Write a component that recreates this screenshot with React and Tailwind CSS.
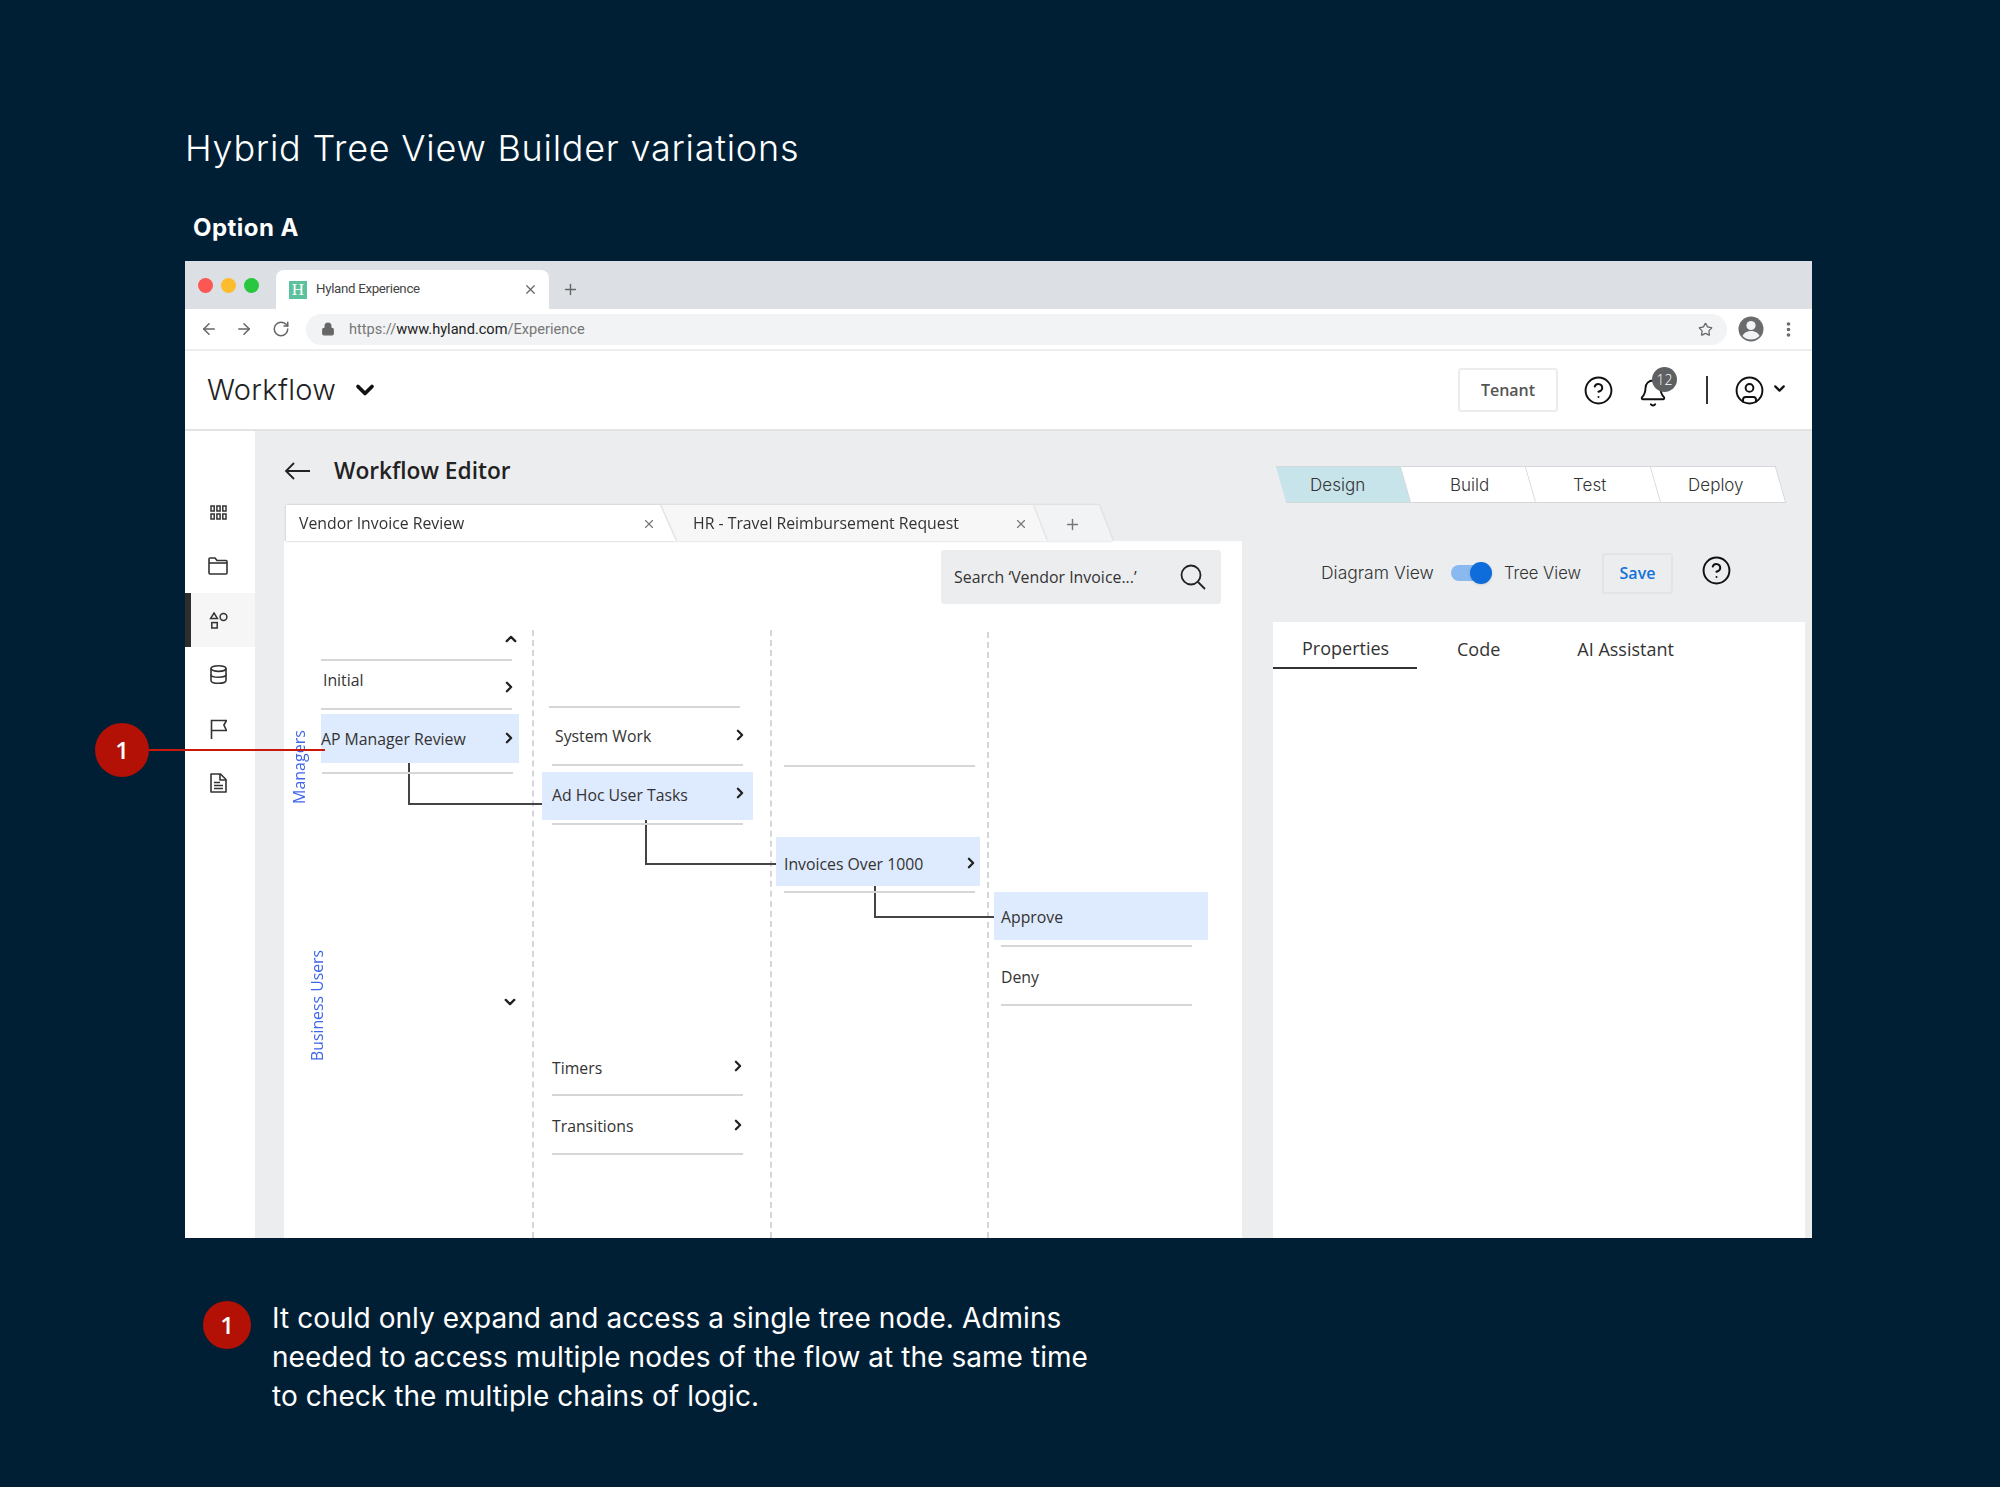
import React from "react";
import { ChevronRight, ChevronDown, ChevronUp, X, Plus, RotateCw, ArrowLeft, ArrowRight, Lock, Star, EllipsisVertical, CircleHelp, Bell, CircleUser } from "lucide-react";

const sansInter = "font-['Inter',sans-serif]";

// Small helpers for the tree canvas, everything in there is placed on the canvas
const Label = ({ className, children }) => (
  <span className={`absolute -translate-y-1/2 text-[15.8px] leading-[22px] text-[#333] whitespace-nowrap ${className}`}>{children}</span>
);
const Rule = ({ className }) => <div className={`absolute h-[2px] bg-[#d4d6d8] ${className}`} />;
const Chev = ({ className, Icon = ChevronRight }) => (
  <Icon size={17} strokeWidth={3.2} className={`absolute -translate-x-1/2 -translate-y-1/2 text-[#222] ${className}`} />
);
const Dashed = ({ className }) => <div className={`absolute bottom-0 border-l-2 border-dashed border-[#d4d6d8] ${className}`} />;
const Elbow = ({ className }) => <div className={`absolute border-l-2 border-b-2 border-[#444] ${className}`} />;
const Box = ({ className }) => <div className={`absolute bg-[#deeafd] ${className}`} />;

const SideIcon = ({ active, children }) => (
  <div className={`h-[54px] flex items-center justify-center border-l-[6px] ${active ? "bg-[#f6f6f6] border-[#2b2d2f]" : "border-transparent"}`}>
    <div className="-translate-x-[5px] flex items-center justify-center">{children}</div>
  </div>
);

const Step = ({ label, active, textClass }) => (
  <div className={`w-[125px] h-full flex items-center justify-center skew-x-[16deg] border-r border-b border-t border-[#d5d7da] ${active ? "bg-[#c7e4ea]" : "bg-white"}`}>
    <span className={`-skew-x-[16deg] pt-[2px] text-[17px] text-[#333] font-light ${sansInter} ${textClass}`}>{label}</span>
  </div>
);

export default function App() {
  return (
    <div className="relative w-[2000px] h-[1487px] bg-[#001f35] font-['Open_Sans',sans-serif] overflow-hidden">
      <div className="pl-[185px]">
        <h1 className={`pt-[125px] h-[204px] text-[36px] leading-[46px] font-light text-white tracking-[0.76px] ${sansInter}`}>
          Hybrid Tree View Builder variations
        </h1>
        <div className={`h-[57px] pl-[8px] pt-[1px] text-[24px] leading-[46px] font-bold text-white tracking-[0.45px] ${sansInter}`}>Option A</div>

        {/* browser frame */}
        <div className="w-[1627px] h-[977px] bg-white flex flex-col overflow-hidden">
          <div className="h-[48px] bg-[#dcdfe3] flex items-end shrink-0">
            <div className="w-[91px] h-full flex items-center pl-[13px] gap-[8px] pt-[1px]">
              <span className="w-[15px] h-[15px] rounded-full bg-[#fc5753]" />
              <span className="w-[15px] h-[15px] rounded-full bg-[#fdbc2c]" />
              <span className="w-[15px] h-[15px] rounded-full bg-[#27c83f]" />
            </div>
            <div className="w-[273px] h-[39px] bg-white rounded-t-[8px] flex items-center pl-[13px] pr-[11px]">
              <span className="w-[18px] h-[18px] bg-[#5cc29d] text-white text-[17px] leading-[18px] text-center font-['Liberation_Serif',serif]">H</span>
              <span className="ml-[9px] flex-1 -mt-[2px] text-[13.3px] tracking-[-0.32px] text-[#444] font-['Roboto',sans-serif]">Hyland Experience</span>
              <X size={15} className="text-[#666]" />
            </div>
            <Plus size={17} className="ml-[13px] mb-[11px] text-[#666]" />
          </div>

          <div className="h-[42px] flex items-center shrink-0 border-b-2 border-[#eceef0]">
            <ArrowLeft size={18} className="ml-[15px] text-[#666]" />
            <ArrowRight size={18} className="ml-[17px] text-[#666]" />
            <RotateCw size={18} className="ml-[19px] text-[#666]" />
            <div className="ml-[16px] w-[1421px] h-[31px] rounded-full bg-[#f1f3f4] flex items-center pl-[15px] pr-[14px] font-['Roboto',sans-serif] text-[14.6px]">
              <Lock size={14} fill="#666" className="text-[#666]" />
              <span className="ml-[14px] flex-1 mt-[2px] text-[#777]">
                https://<span className="text-[#222]">www.hyland.com</span>/Experience
              </span>
              <Star size={15} className="text-[#666]" />
            </div>
            <svg width="26" height="26" viewBox="0 0 26 26" className="ml-[11px]">
              <circle cx="13" cy="13" r="12.5" fill="#6a6b6d" />
              <circle cx="13" cy="9.5" r="4.6" fill="#f1f3f4" />
              <path d="M4.5 20c1.5-3.6 5-5 8.5-5s7 1.4 8.5 5a12 12 0 0 1-17 0z" fill="#f1f3f4" />
            </svg>
            <EllipsisVertical size={19} strokeWidth={2.6} className="ml-[15px] text-[#666]" />
          </div>

          <div className="h-[80px] flex items-center shrink-0 border-b-2 border-[#e2e3e5] pl-[22px]">
            <span className={`text-[29px] font-light text-[#222] tracking-[0.28px] ${sansInter}`}>Workflow</span>
            <ChevronDown size={28} strokeWidth={3.2} className="ml-[15px] text-[#111]" />
            <div className="ml-auto flex items-center pr-[24px]">
              <div className="w-[100px] h-[44px] rounded-[3px] border-2 border-[#ebecee] flex items-center justify-center text-[16px] font-semibold text-[#555]">Tenant</div>
              <CircleHelp size={31} strokeWidth={1.5} className="ml-[25px] text-[#111]" />
              <div className="relative ml-[24px] mt-[6px]">
                <Bell size={30} strokeWidth={1.5} className="text-[#111]" />
                <span className="absolute -top-[11px] left-[14px] w-[25px] h-[25px] rounded-full bg-[#5f6062] text-white text-[14px] font-light leading-[25px] text-center">12</span>
              </div>
              <div className="ml-[38px] w-[2px] h-[28px] bg-[#333]" />
              <CircleUser size={31} strokeWidth={1.5} className="ml-[26px] text-[#111]" />
              <ChevronDown size={17} strokeWidth={3} className="ml-[6px] -mt-[3px] text-[#111]" />
            </div>
          </div>

          <div className="flex-1 flex min-h-0">
            {/* side rail */}
            <div className="w-[70px] shrink-0 pt-[54px] flex flex-col">
              <SideIcon>
                <svg width="17" height="15" viewBox="0 0 17 15" fill="none" stroke="#333" strokeWidth="1.5">
                  <rect x="1" y="1" width="3.2" height="5" /><rect x="6.9" y="1" width="3.2" height="5" /><rect x="12.8" y="1" width="3.2" height="5" />
                  <rect x="1" y="9" width="3.2" height="5" /><rect x="6.9" y="9" width="3.2" height="5" /><rect x="12.8" y="9" width="3.2" height="5" />
                </svg>
              </SideIcon>
              <SideIcon>
                <svg width="20" height="18" viewBox="0 0 20 18" fill="none" stroke="#333" strokeWidth="1.6" strokeLinejoin="round">
                  <path d="M1 2a1 1 0 0 1 1-1h5l2 2.5h9a1 1 0 0 1 1 1V16a1 1 0 0 1-1 1H2a1 1 0 0 1-1-1z" />
                  <path d="M1 6h18" />
                </svg>
              </SideIcon>
              <SideIcon active>
                <svg width="19" height="17" viewBox="0 0 19 17" fill="none" stroke="#333" strokeWidth="1.5" className="mt-[1px]">
                  <path d="M5 1l3.4 5.4H1.6z" /><circle cx="14.5" cy="5" r="3.4" /><rect x="2.8" y="10.6" width="5.4" height="5.4" />
                </svg>
              </SideIcon>
              <SideIcon>
                <svg width="17" height="19" viewBox="0 0 17 19" fill="none" stroke="#333" strokeWidth="1.6">
                  <ellipse cx="8.5" cy="3.6" rx="7.5" ry="2.8" />
                  <path d="M1 3.6v11.8c0 1.6 3.4 2.8 7.5 2.8s7.5-1.2 7.5-2.8V3.6" />
                  <path d="M1 9.5c0 1.6 3.4 2.8 7.5 2.8S16 11.1 16 9.5" />
                </svg>
              </SideIcon>
              <SideIcon>
                <svg width="17" height="20" viewBox="0 0 17 20" fill="none" stroke="#333" strokeWidth="1.6" className="mt-[1px]">
                  <path d="M1.5 20V1.5h15l-2.6 4.5 2.6 5.500h-15" />
                </svg>
              </SideIcon>
              <SideIcon>
                <svg width="17" height="20" viewBox="0 0 17 20" fill="none" stroke="#333" strokeWidth="1.6" strokeLinejoin="round" className="mt-[1px]">
                  <path d="M1 1h9.5L16 6.5V19H1z" />
                  <path d="M10 1v6h6" />
                  <path d="M4 9.5h6M4 12.5h9M4 15.5h9" />
                </svg>
              </SideIcon>
            </div>

            <div className="flex-1 bg-[#ecedef] flex min-w-0">
              {/* editor column */}
              <div className="w-[987px] shrink-0 pl-[29px] flex flex-col">
                <div className="h-[74px] flex items-center shrink-0 pt-[6px]">
                  <svg width="26" height="20" viewBox="0 0 26 20" fill="none" stroke="#222" strokeWidth="1.8">
                    <path d="M26 10H2M10 2l-8 8 8 8" />
                  </svg>
                  <span className="ml-[24px] text-[22.7px] font-semibold text-[#222]">Workflow Editor</span>
                </div>
                <div className="h-[36px] flex shrink-0 ml-[2px]">
                  <div className="relative z-[3] w-[390px] h-full drop-shadow-[0_0_1px_#b9bbbe]">
                    <div className="w-full h-full bg-white flex items-center pl-[13px] pr-[20px] pt-[2px] [clip-path:polygon(0_0,374px_0,390px_100%,0_100%)]">
                      <span className="flex-1 text-[15.8px] text-[#333]">Vendor Invoice Review</span>
                      <X size={14} className="text-[#777]" />
                    </div>
                  </div>
                  <div className="relative z-[2] -ml-[16px] w-[387px] h-full drop-shadow-[0_0_1px_#c6c8cb]">
                    <div className="w-full h-full bg-[#f7f7f7] flex items-center pl-[33px] pr-[19px] pt-[2px] [clip-path:polygon(0_0,373px_0,387px_100%,16px_100%)]">
                      <span className="flex-1 text-[15.8px] text-[#333]">HR - Travel Reimbursement Request</span>
                      <X size={14} className="text-[#777]" />
                    </div>
                  </div>
                  <div className="relative z-[1] -ml-[14px] w-[80px] h-full drop-shadow-[0_0_1px_#c6c8cb]">
                    <div className="w-full h-full bg-[#f2f3f4] flex items-center justify-center pr-[2px] pt-[2px] [clip-path:polygon(0_0,66px_0,80px_100%,14px_100%)]">
                      <Plus size={17} className="text-[#777]" />
                    </div>
                  </div>
                </div>

                {/* tree canvas */}
                <div className="relative flex-1 bg-white w-[958px]">
                  <div className="absolute right-[21px] top-[9px] w-[280px] h-[54px] rounded-[3px] bg-[#ecedef] flex items-center pl-[13px] pr-[15px] text-[15.9px] text-[#333]">
                    <span className="flex-1 mt-[2px]">Search ‘Vendor Invoice...’</span>
                    <svg width="26" height="26" viewBox="0 0 26 26" fill="none" stroke="#222" strokeWidth="1.8"><circle cx="11" cy="11" r="9.5" /><path d="M18 18l7 7" /></svg>
                  </div>

                  <Dashed className="left-[248px] top-[89px]" />
                  <Dashed className="left-[486px] top-[89px]" />
                  <Dashed className="left-[703px] top-[91px]" />

                  <Box className="left-[37px] top-[173px] w-[198px] h-[49px]" />
                  <Box className="left-[258px] top-[231px] w-[211px] h-[48px]" />
                  <Box className="left-[492px] top-[296px] w-[204px] h-[49px]" />
                  <Box className="left-[710px] top-[351px] w-[214px] h-[48px]" />

                  <Elbow className="left-[124px] top-[222px] w-[134px] h-[42px]" />
                  <Elbow className="left-[361px] top-[279px] w-[131px] h-[45px]" />
                  <Elbow className="left-[590px] top-[345px] w-[120px] h-[32px]" />

                  <Chev Icon={ChevronUp} className="left-[227px] top-[98px]" />
                  <Rule className="left-[37px] top-[118px] w-[191px]" />
                  <Label className="left-[39px] top-[139px]">Initial</Label>
                  <Chev className="left-[225px] top-[146px]" />
                  <Rule className="left-[37px] top-[167px] w-[191px]" />
                  <Label className="left-[37px] top-[198px]">AP Manager Review</Label>
                  <Chev className="left-[225px] top-[197px]" />
                  <Rule className="left-[38px] top-[231px] w-[191px]" />

                  <Rule className="left-[265px] top-[165px] w-[191px]" />
                  <Label className="left-[271px] top-[195px]">System Work</Label>
                  <Chev className="left-[456px] top-[194px]" />
                  <Rule className="left-[268px] top-[223px] w-[191px]" />
                  <Label className="left-[268px] top-[254px]">Ad Hoc User Tasks</Label>
                  <Chev className="left-[456px] top-[252px]" />
                  <Rule className="left-[268px] top-[282px] w-[191px]" />

                  <Rule className="left-[500px] top-[224px] w-[191px]" />
                  <Label className="left-[500px] top-[323px]">Invoices Over 1000</Label>
                  <Chev className="left-[687px] top-[322px]" />
                  <Rule className="left-[500px] top-[350px] w-[191px]" />

                  <Label className="left-[717px] top-[376px]">Approve</Label>
                  <Rule className="left-[717px] top-[404px] w-[191px]" />
                  <Label className="left-[717px] top-[436px]">Deny</Label>
                  <Rule className="left-[717px] top-[463px] w-[191px]" />

                  <Chev Icon={ChevronDown} className="left-[226px] top-[461px]" />
                  <Label className="left-[268px] top-[527px]">Timers</Label>
                  <Chev className="left-[454px] top-[525px]" />
                  <Rule className="left-[268px] top-[553px] w-[191px]" />
                  <Label className="left-[268px] top-[585px]">Transitions</Label>
                  <Chev className="left-[454px] top-[584px]" />
                  <Rule className="left-[268px] top-[612px] w-[191px]" />

                  <span className="absolute left-[6px] top-[189px] h-[74px] [writing-mode:vertical-rl] rotate-180 text-[16px] leading-[18px] text-[#3f66ea] whitespace-nowrap">Managers</span>
                  <span className="absolute left-[24px] top-[408px] h-[112px] [writing-mode:vertical-rl] rotate-180 text-[15.8px] leading-[18px] text-[#3f66ea] whitespace-nowrap">Business Users</span>
                </div>
              </div>

              {/* right column */}
              <div className="flex-1 flex flex-col min-w-0">
                <div className="h-[37px] mt-[35px] flex pl-[39px] shrink-0">
                  <Step label="Design" active textClass="-translate-x-[5px]" />
                  <Step label="Build" textClass="translate-x-[2px]" />
                  <Step label="Test" textClass="-translate-x-[3px]" />
                  <Step label="Deploy" textClass="-translate-x-[2px]" />
                </div>
                <div className="h-[119px] flex items-center shrink-0 pl-[79px] pt-[21px] text-[17.5px] font-light text-[#333]">
                  <span className={sansInter}>Diagram View</span>
                  <div className="relative ml-[17px] w-[41px] h-[16px] rounded-full bg-[#8ab9ef]">
                    <span className="absolute right-0 -top-[3px] w-[22px] h-[22px] rounded-full bg-[#0f6cdb] shadow" />
                  </div>
                  <span className={`ml-[12px] text-[16.6px] ${sansInter}`}>Tree View</span>
                  <div className="ml-[21px] w-[71px] h-[41px] rounded-[3px] border-2 border-[#e3e4e6] flex items-center justify-center text-[16px] font-semibold text-[#1272d8] font-['Open_Sans',sans-serif]">Save</div>
                  <CircleHelp size={31} strokeWidth={1.5} className="ml-[28px] -mt-[6px] text-[#111]" />
                </div>
                <div className="flex-1 ml-[31px] w-[532px] bg-white">
                  <div className="flex h-[47px] text-[18px] text-[#333]">
                    <div className="w-[144px] h-full flex items-center pl-[29px] pt-[8px] border-b-2 border-[#333]">Properties</div>
                    <div className="ml-[40px] h-full flex items-center pt-[8px]">Code</div>
                    <div className="ml-[77px] h-full flex items-center pt-[8px]">AI Assistant</div>
                  </div>
                </div>
              </div>
            </div>
          </div>
        </div>

        {/* note */}
        <div className="flex pl-[18px] pt-[62px]">
          <span className="w-[48px] h-[48px] mt-[1px] rounded-full bg-[#b31105] text-white text-[24px] font-semibold leading-[48px] text-center shrink-0">1</span>
          <p className={`ml-[21px] -mt-[1px] w-[830px] text-[28px] leading-[39px] text-white tracking-[0.06px] ${sansInter}`}>
            It could only expand and access a single tree node. Admins needed to access multiple nodes of the flow at the same time to check the multiple chains of logic.
          </p>
        </div>
      </div>

      {/* callout sits over the frame */}
      <div className="absolute left-[95px] top-[723px] flex items-center">
        <span className="w-[54px] h-[54px] rounded-full bg-[#b31105] text-white text-[24px] font-semibold leading-[54px] text-center">1</span>
        <div className="w-[176px] h-[2px] bg-[#c8190c]" />
      </div>
    </div>
  );
}
